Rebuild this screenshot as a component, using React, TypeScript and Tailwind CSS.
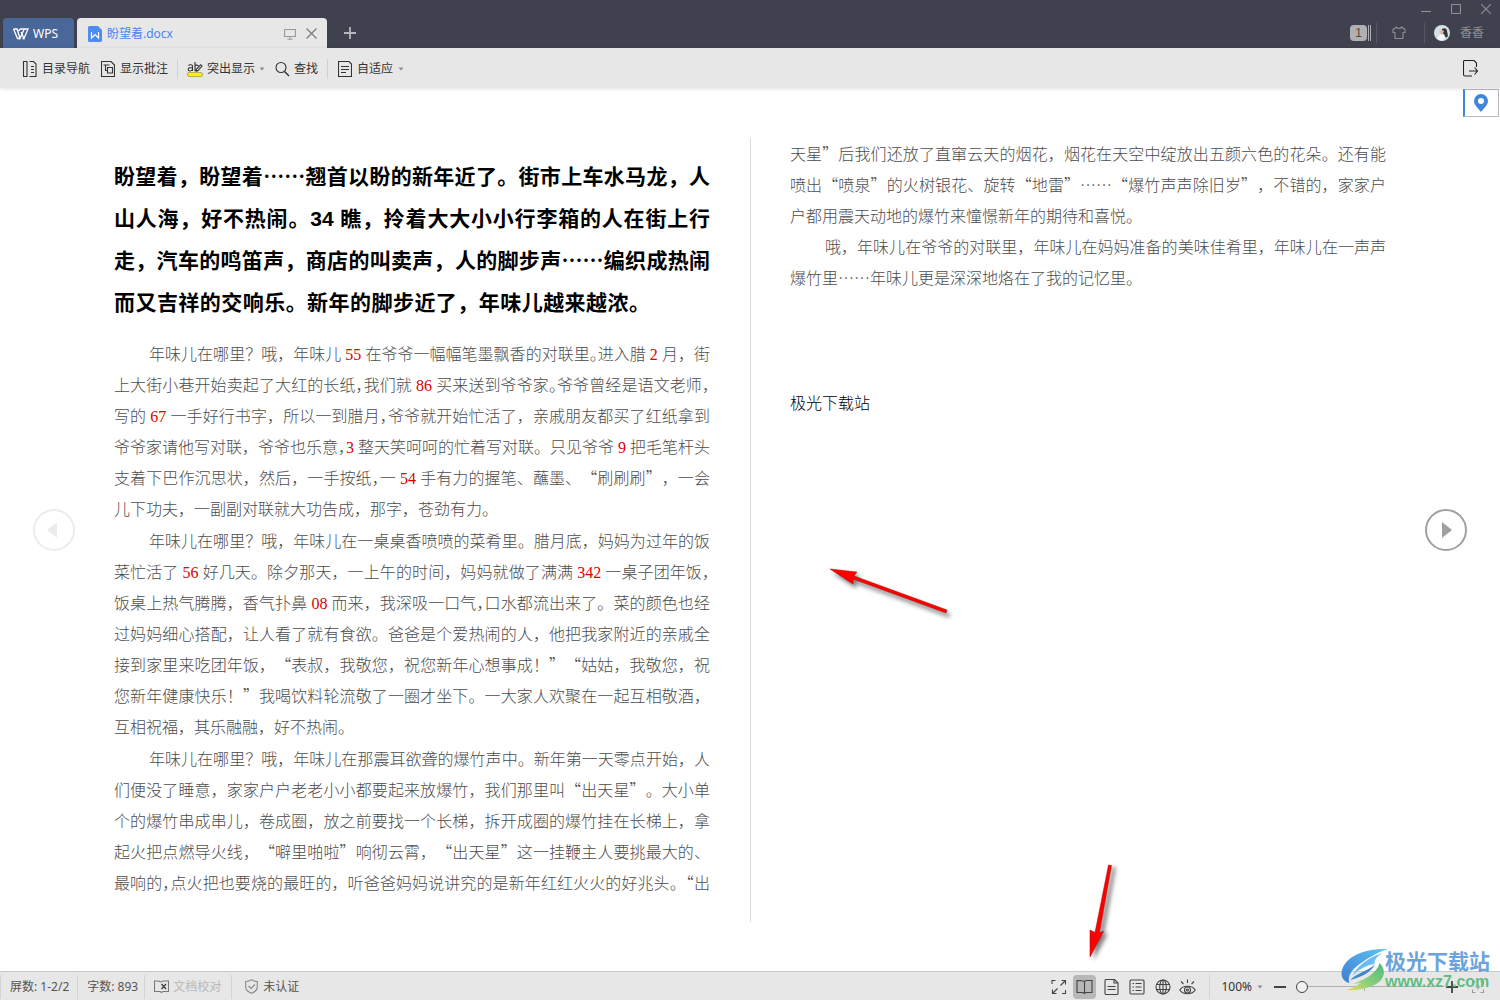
import React from 'react';

type IconProps = { className?: string; children: React.ReactNode; w?: number; h?: number };

const Icon = ({ className = '', children, w = 16, h = 16 }: IconProps) => (
  <svg
    width={w}
    height={h}
    viewBox={`0 0 ${w} ${h}`}
    fill="none"
    stroke="currentColor"
    strokeWidth="1.1"
    className={`shrink-0 ${className}`}
    aria-hidden="true"
  >
    {children}
  </svg>
);

const Caret = () => (
  <svg width="6" height="4" viewBox="0 0 6 4" className="shrink-0 fill-[#8a8a8a]" aria-hidden="true">
    <path d="M0.5 0.5h5L3 3.5z" />
  </svg>
);

// "^" in front of a punctuation mark sets it half width
const HEADING = [
  '盼望着，盼望着……翘首以盼的新年近了。街市上车水马龙，人',
  '山人海，好不热闹。34 瞧，拎着大大小小行李箱的人在街上行',
  '走，汽车的鸣笛声，商店的叫卖声，人的脚步声……编织成热闹',
  '而又吉祥的交响乐。新年的脚步近了，年味儿越来越浓。',
];

const LEFT = [
  [
    '年味儿在哪里？哦，年味儿 55 在爷爷一幅幅笔墨飘香的对联里^。进入腊 2 月，街',
    '上大街小巷开始卖起了大红的长纸^，我们就 86 买来送到爷爷家^。爷爷曾经是语文老师^，',
    '写的 67 一手好行书字，所以一到腊月^，爷爷就开始忙活了，亲戚朋友都买了红纸拿到',
    '爷爷家请他写对联，爷爷也乐意^，3 整天笑呵呵的忙着写对联。只见爷爷 9 把毛笔杆头',
    '支着下巴作沉思状，然后，一手按纸^，一 54 手有力的握笔、蘸墨、“刷刷刷”，一会',
    '儿下功夫，一副副对联就大功告成，那字，苍劲有力。',
  ],
  [
    '年味儿在哪里？哦，年味儿在一桌桌香喷喷的菜肴里。腊月底，妈妈为过年的饭',
    '菜忙活了 56 好几天。除夕那天，一上午的时间，妈妈就做了满满 342 一桌子团年饭^，',
    '饭桌上热气腾腾，香气扑鼻 08 而来，我深吸一口气^，口水都流出来了。菜的颜色也经',
    '过妈妈细心搭配，让人看了就有食欲。爸爸是个爱热闹的人，他把我家附近的亲戚全',
    '接到家里来吃团年饭，“表叔，我敬您，祝您新年心想事成！”“姑姑，我敬您，祝',
    '您新年健康快乐！”我喝饮料轮流敬了一圈才坐下。一大家人欢聚在一起互相敬酒，',
    '互相祝福，其乐融融，好不热闹。',
  ],
  [
    '年味儿在哪里？哦，年味儿在那震耳欲聋的爆竹声中。新年第一天零点开始，人',
    '们便没了睡意，家家户户老老小小都要起来放爆竹，我们那里叫“出天星”。大小单',
    '个的爆竹串成串儿，卷成圈，放之前要找一个长梯，拆开成圈的爆竹挂在长梯上，拿',
    '起火把点燃导火线，“噼里啪啦”响彻云霄，“出天星”这一挂鞭主人要挑最大的、',
    '最响的^，点火把也要烧的最旺的，听爸爸妈妈说讲究的是新年红红火火的好兆头^。“出',
  ],
];

const RIGHT = [
  [
    '天星”后我们还放了直窜云天的烟花，烟花在天空中绽放出五颜六色的花朵。还有能',
    '喷出“喷泉”的火树银花、旋转“地雷”……“爆竹声声除旧岁”，不错的，家家户',
    '户都用震天动地的爆竹来憧憬新年的期待和喜悦。',
  ],
  [
    '哦，年味儿在爷爷的对联里，年味儿在妈妈准备的美味佳肴里，年味儿在一声声',
    '爆竹里……年味儿更是深深地烙在了我的记忆里。',
  ],
];

const renderLine = (text: string, digits: string) =>
  text.split(/(\^.| ?\d+ ?)/).map((part, i) => {
    if (part.startsWith('^')) {
      return <span key={i} className="[font-feature-settings:'halt']">{part.slice(1)}</span>;
    }
    if (/\d/.test(part)) {
      return <span key={i} className={digits}>{part}</span>;
    }
    return part;
  });

const Paragraph = ({ lines, indent = true, open = false }: { lines: string[]; indent?: boolean; open?: boolean }) => (
  <p>
    {lines.map((line, i) => {
      const last = i === lines.length - 1 && !open;
      return (
        <span
          key={i}
          className={`block h-[31px] whitespace-nowrap ${last ? '' : '[text-align-last:justify]'} ${i === 0 && indent ? 'pl-[35px]' : ''}`}
        >
          {renderLine(line, "font-['Liberation_Serif',serif] text-[#e00000]")}
        </span>
      );
    })}
  </p>
);

const TitleBar = () => (
  <header className="flex h-12 items-end bg-[#3f424e] pl-[3px]">
    <button className="flex h-[30px] w-[71px] items-center gap-1 rounded-t bg-[#4a6799] pl-2.5 pt-px text-xs text-white">
      <Icon w={16} h={12} className="text-white">
        <path d="M0.5 1h3.5l3 9.5L11 1.5M4.5 3.5L7.5 1h7.5L11 10.5 8 4M0.5 1l4 9.5h2.5l1.5-3.5M11 10.5H9.5" strokeWidth="1.3" />
      </Icon>
      WPS
    </button>
    <div className="ml-[3px] flex h-[30px] w-[250px] items-center rounded-t bg-[#e7e7e7] pl-[11px] pr-2.5 pt-px">
      <svg width="14" height="16" viewBox="0 0 14 16" className="shrink-0" aria-hidden="true">
        <path d="M1.5 0H10l4 4v10.5a1.5 1.5 0 0 1-1.5 1.5h-11A1.5 1.5 0 0 1 0 14.5v-13A1.5 1.5 0 0 1 1.5 0z" fill="#4f8bf0" />
        <path d="M3.5 6v6L7 8.5l3.5 3.5V6" fill="none" stroke="#fff" strokeWidth="1.2" />
      </svg>
      <span className="ml-[5px] flex-1 text-xs text-[#4a86ee]">盼望着.docx</span>
      <button aria-label="演示" className="text-[#999]">
        <Icon w={12} h={12}>
          <path d="M0.5 1.5h11v7H0.5zM6 8.500v2.500M3.500 11.300h5" />
        </Icon>
      </button>
      <button aria-label="关闭标签" className="ml-2.5 text-[#777]">
        <Icon w={11} h={11}>
          <path d="M0.5 0.5l10 10M10.500 0.500l-10 10" />
        </Icon>
      </button>
    </div>
    <button aria-label="新建" className="mb-[9px] ml-[17px] text-[#b5b7bc]">
      <Icon w={12} h={12}>
        <path d="M6 0v12M0 6h12" strokeWidth="1.8" />
      </Icon>
    </button>
    <div className="ml-auto flex h-12 flex-col justify-between pb-[5px] pt-1">
      <div className="flex justify-end gap-5 pr-[9px] text-[#8d8f97]">
        <button aria-label="最小化"><Icon w={10} h={10}><path d="M0 7.500h10" /></Icon></button>
        <button aria-label="最大化"><Icon w={10} h={10}><rect x="0.5" y="0.5" width="9" height="9" rx="1" /></Icon></button>
        <button aria-label="关闭"><Icon w={10} h={10}><path d="M0 0l10 10M10 0L0 10" /></Icon></button>
      </div>
      <div className="flex items-center pr-4 text-[#8d8f97]">
        <button className="flex items-center gap-px">
          <span className="h-4 w-[17px] rounded-sm bg-[#b0b0b4] text-center font-['Liberation_Sans',sans-serif] text-xs leading-4 text-[#5c4630]">1</span>
          <span className="h-4 w-px bg-[#b0b0b4]" />
          <span className="h-4 w-px bg-[#b0b0b4]" />
        </button>
        <span className="ml-[5px] h-5 w-px bg-[#565963]" />
        <button aria-label="皮肤" className="ml-[15px]">
          <Icon w={14} h={14}>
            <path d="M4.500 1L1 3.500v3h2v6h8v-6h2v-3L9.500 1c-.6 2-4.400 2-5 0z" strokeLinejoin="round" />
          </Icon>
        </button>
        <span className="ml-[18px] h-5 w-px bg-[#565963]" />
        <svg width="16" height="16" viewBox="0 0 16 16" className="ml-[9px]" aria-hidden="true">
          <circle cx="8" cy="8" r="8" fill="#d5e2e5" />
          <path d="M8 4c2-1.500 5-1 5 2l1 5-2 2-2-4-3-1z" fill="#3a3236" />
          <path d="M5.500 6c1-1 4-1 4.500 0l-1 2.500L6 9z" fill="#e2b9ae" />
          <path d="M3 13l4-4 4 3-2 3.500c-2.500.3-4.500-.5-6-2.500z" fill="#f4f7f8" />
        </svg>
        <span className="ml-2.5 text-xs leading-4">香香</span>
      </div>
    </div>
  </header>
);

const ToolBar = () => (
  <nav className="relative z-10 flex h-10 items-center bg-[#e7e7e7] pl-[22px] pr-[22px] pt-px text-xs text-[#333] shadow-[0_1px_4px_rgba(0,0,0,0.12)]">
    <button className="flex items-center gap-[5px]">
      <Icon w={15}>
        <path d="M1.500.5h3.500v15H1.500zM7.500.5h4l2.500 2.500v12.500H7.500M9 5.500h3M9 8.500h3M9 11.500h3" />
      </Icon>
      目录导航
    </button>
    <button className="ml-[11px] flex items-center gap-[5px]">
      <Icon w={14}>
        <path d="M.5.5h9.500l3.500 3.500v11.500H.5zM2.500 4h6M4.500 4v5.500h1.500M6.500 6.500h5v5.500h-5z" />
      </Icon>
      显示批注
    </button>
    <span className="ml-[9px] h-5 w-px bg-[#d0d0d0]" />
    <button className="ml-[9px] flex items-center gap-1">
      <svg width="16" height="16" viewBox="0 0 16 16" fill="none" stroke="#333" strokeWidth="1.1" aria-hidden="true">
        <path d="M1.500 4.500c1-1 4-1.200 4 .8v4.700M5.500 6.500c-2 0-4.300.2-4.300 2s3 2 4.300 0M8 1v9M8 5c1.500-1.600 4-.8 4 1.500M8 9.500c1 .8 2 .8 3 0l4-4.500-1.200-1.300-4.300 4.300-.5 2" />
        <rect x="0.5" y="11.500" width="15" height="4" rx="1.500" fill="#fff100" stroke="#8b8b4a" strokeWidth="0.6" />
      </svg>
      突出显示
      <Caret />
    </button>
    <button className="ml-2.5 flex items-center gap-1">
      <Icon w={15}>
        <circle cx="6" cy="6.500" r="5" />
        <path d="M9.500 10.500l4.500 4.500" strokeWidth="1.4" />
      </Icon>
      查找
    </button>
    <span className="ml-[9px] h-5 w-px bg-[#d0d0d0]" />
    <button className="ml-2.5 flex items-center gap-[5px]">
      <Icon w={14}>
        <path d="M.5.5h10.500l2.500 2.500v12.500H.5zM3 5.500h8M3 8.500h8M3 11.500h5" />
      </Icon>
      <span>自适应</span>
      <Caret />
    </button>
    <button aria-label="退出阅读" className="ml-auto">
      <Icon w={15} h={17} className="text-[#222]">
        <path d="M9 16H2a1.500 1.500 0 0 1-1.500-1.500v-13A1 1 0 0 1 1.500.5H11l2.500 2.500v4M6 11h9M11.500 7.500l3 3.500-3 3.500" />
      </Icon>
    </button>
  </nav>
);

const Divider = ({ className = '' }: { className?: string }) => (
  <span className={`h-6 w-px bg-[#d3d3d3] ${className}`} />
);

const StatusBar = () => (
  <footer className="flex h-[29px] items-center border-t border-[#c9c9c9] bg-[#e7e7e7] pt-px text-xs text-[#555]">
    <Divider />
    <span className="ml-[9px]">屏数: 1-2/2</span>
    <Divider className="ml-2" />
    <span className="ml-[9px]">字数: 893</span>
    <Divider className="ml-1.5" />
    <button className="ml-[9px] flex items-center gap-1 text-[#b8b8b8]">
      <Icon w={15} h={13} className="text-[#777]">
        <path d="M7 2C5.500 1 3 .8.5 1v10.500h5c1 0 1.500.5 2 1 .5-.5 1-1 2-1h5V1h-5C8.500 1 8 1.500 7.500 2" />
        <path d="M7.500 4l4.500 5M12 4L7.500 9" strokeWidth="1.400" stroke="#444" />
      </Icon>
      文档校对
    </button>
    <Divider className="ml-2.5" />
    <button className="ml-[13px] flex items-center gap-[5px]">
      <Icon w={13} h={15} className="text-[#888]">
        <path d="M6.500.7C5 2 3 2.500.7 2.500V8c0 3 2.500 5 5.800 6.300C9.800 13 12.300 11 12.300 8V2.500C10 2.500 8 2 6.500.7zM3.500 7l2.500 2.500L10 5.500" />
      </Icon>
      未认证
    </button>

    <div className="ml-auto flex items-center text-[#444]">
      <button aria-label="全屏">
        <Icon w={16}><path d="M1 5V1.500h3.500M10.500 1.500h4V5.500M14.500 1.500l-5 5M1.500 10.500v4h4M1.500 14.500l5-5M14.500 11v3.500H11" /></Icon>
      </button>
      <button aria-label="阅读版式" aria-pressed="true" className="ml-1.5 flex h-6 w-[23px] items-center justify-center rounded bg-[#b8b8b8]">
        <Icon w={17}><path d="M8.500 2.500C7.500 1.500 6 1.500 1 1.500v12h5.500c1 0 1.500.5 2 1 .5-.5 1-1 2-1H16v-12h-5c-1.500 0-2 .3-2.500 1zv12" /></Icon>
      </button>
      <button aria-label="页面视图" className="ml-2">
        <Icon w={15}><path d="M2 .5h8.500L14 4v10.500a1 1 0 0 1-1 1H2a1 1 0 0 1-1-1v-13a1 1 0 0 1 1-1zM10 .5V4h4M3.500 7.500h8M3.500 10.500h8" /></Icon>
      </button>
      <button aria-label="大纲视图" className="ml-2.5">
        <Icon w={16}><rect x="1" y="1" width="14" height="14" rx="1" /><path d="M3.500 4.500h1.500M6.500 4.500h6M3.500 8h1.500M6.500 8h6M6.500 11.500h6M3.500 11.500h1.500" /></Icon>
      </button>
      <button aria-label="网页版式" className="ml-2.5">
        <Icon w={16}><circle cx="8" cy="8" r="7" /><ellipse cx="8" cy="8" rx="3.300" ry="7" /><path d="M1.500 5.500h13M1.500 10.500h13M8 1v14" /></Icon>
      </button>
      <button aria-label="护眼模式" className="ml-2">
        <Icon w={17}><path d="M.8 11c3-5 12.400-5 15.400 0-3 5-12.400 5-15.400 0zM8.500.5v3.500M2 2.500l2.500 2.500M15 2.500L12.500 5" /><circle cx="8.500" cy="11" r="3" /><circle cx="8.500" cy="11" r="1" /></Icon>
      </button>
      <Divider className="ml-[13px]" />
      <button className="ml-[11px] flex items-center gap-[5px] text-[#333]">100%<Caret /></button>
      <button aria-label="缩小" className="ml-[11px] h-0.5 w-3 bg-[#444]" />
      <div className="relative ml-2.5 flex h-3 w-[148px] items-center">
        <span className="h-px w-full bg-[#b0b0b0]" />
        <span className="absolute left-[68px] h-2 w-px bg-[#b0b0b0]" />
        <input
          type="range"
          aria-label="缩放"
          min={0}
          max={100}
          defaultValue={0}
          className="absolute inset-0 h-3 w-full appearance-none bg-transparent [&::-webkit-slider-thumb]:size-3 [&::-webkit-slider-thumb]:appearance-none [&::-webkit-slider-thumb]:rounded-full [&::-webkit-slider-thumb]:border [&::-webkit-slider-thumb]:border-[#444] [&::-webkit-slider-thumb]:bg-[#f2f2f2]"
        />
      </div>
      <button aria-label="放大" className="ml-0.5">
        <Icon w={12} h={12}><path d="M6 0v12M0 6h12" strokeWidth="1.800" /></Icon>
      </button>
      <button aria-label="适应窗口" className="ml-3.5 mr-4 text-[#999]">
        <Icon w={12} h={12}><path d="M.5 3.500v-3h3M8.500.5h3v3M11.500 8.500v3h-3M3.500 11.500h-3v-3M6 3.500v5M3.500 6h5" /></Icon>
      </button>
    </div>
  </footer>
);

const Watermark = () => (
  <div className="pointer-events-none absolute bottom-[7px] right-2.5 z-20 flex items-start">
    <svg width="48" height="44" viewBox="0 0 46 44" preserveAspectRatio="none" aria-hidden="true">
      <defs>
        <linearGradient id="blueWing" x1="0" y1="1" x2="1" y2="0">
          <stop offset="0" stopColor="#3f7fd0" />
          <stop offset="1" stopColor="#5cc4f5" />
        </linearGradient>
        <linearGradient id="greenWing" x1="0" y1="1" x2="1" y2="0">
          <stop offset="0" stopColor="#e8dc5a" />
          <stop offset="0.4" stopColor="#8fd07c" />
          <stop offset="1" stopColor="#4dba7c" />
        </linearGradient>
      </defs>
      {/* two interlocking crescents with a pale gap between them */}
      <path d="M45 1C28 0 10 5 3 17c-5 9-2 16 5 18-2-7 2-13 10-19C25 11 33 5 45 1z" fill="url(#blueWing)" />
      <path d="M40 5C27 9 16 17 11 28c6-7 14-11 21-12 0-5 3-8 8-11z" fill="#69bdf0" />
      <path d="M37 15c7 7 5 17-5 22-8 4-19 6-27 5 6-2 10-4 14-7l-8 1c11-4 23-10 26-21z" fill="url(#greenWing)" />
      <path d="M9 32c6-7 17-9 24-16-4 8-13 13-24 16z" fill="#3e87c9" />
    </svg>
    <div className="-ml-1 pt-px">
      <p className="font-['Noto_Sans_CJK_SC',sans-serif] text-[21px] font-bold leading-[22px] text-[#6ba3dc]">极光下载站</p>
      <p className="font-['Liberation_Sans',sans-serif] text-base font-bold leading-[22px] text-[#62bd83]">www.xz7.com</p>
    </div>
  </div>
);

export default function App() {
  return (
    <div className="relative flex min-h-screen flex-col bg-white font-['Noto_Sans','Noto_Sans_CJK_SC',sans-serif]">
      <TitleBar />
      <ToolBar />

      <main className="relative flex flex-1 items-stretch px-[33px] pb-[49px] pt-[50px]">
        <button aria-label="上一页" className="flex size-[42px] shrink-0 items-center justify-center self-center rounded-full border-2 border-[#ececec]">
          <svg width="10" height="16" viewBox="0 0 10 16" className="mr-1 fill-[#ececec]"><path d="M10 0v16L0 8z" /></svg>
        </button>

        <article lang="zh-CN" className="mx-[39px] flex flex-1 font-['Noto_Sans_CJK_SC',sans-serif] text-base leading-[31px] text-[#4c4c4c] [text-spacing-trim:space-all]">
          <section className="min-w-0 flex-1">
            <h1 className="mt-4 text-[21px] font-bold leading-[42px] text-black">
              {HEADING.map((line, i) => (
                <span key={i} className={`block h-[42px] whitespace-nowrap [text-align-last:justify] ${i === 3 ? 'mr-[60px]' : ''}`}>
                  {renderLine(line, "font-['Liberation_Sans',sans-serif]")}
                </span>
              ))}
            </h1>
            <div className="mt-4 space-y-px font-light">
              {LEFT.map((lines, i) => (
                <Paragraph key={i} lines={lines} open={i === 2} />
              ))}
            </div>
          </section>
          <div className="ml-10 mr-[39px] w-px bg-[#dcdcdc]" />
          <section className="min-w-0 flex-1 font-light">
            {RIGHT.map((lines, i) => (
              <Paragraph key={i} lines={lines} indent={i > 0} />
            ))}
            <p className="mt-[94px] text-black">极光下载站</p>
          </section>
        </article>

        <button aria-label="下一页" className="flex size-[42px] shrink-0 items-center justify-center self-center rounded-full border-2 border-[#a0a0a0]">
          <svg width="10" height="16" viewBox="0 0 10 16" className="ml-0.5 fill-[#a0a0a0]"><path d="M0 0v16l10-8z" /></svg>
        </button>

        <button aria-label="定位" className="absolute right-px top-px flex h-7 w-9 items-center justify-center border border-l-2 border-[#b8b8c0] border-l-[#4186d8] bg-white pr-0.5">
          <svg width="14" height="18" viewBox="0 0 14 18" aria-hidden="true">
            <path d="M7 0a7 7 0 0 1 7 7c0 4-4 7-7 11C4 14 0 11 0 7a7 7 0 0 1 7-7zm0 4a3 3 0 1 0 0 6 3 3 0 0 0 0-6z" fill="#4186d8" fillRule="evenodd" />
          </svg>
        </button>

        <svg width="130" height="60" viewBox="0 0 130 60" className="absolute left-[825px] top-[472px] drop-shadow-[3px_4px_2px_rgba(0,0,0,0.5)]" aria-hidden="true">
          <path d="M5 9l27 3-3 4 93 34-1 3-93-34v5z" fill="#f00" stroke="#a00" strokeWidth="0.5" />
        </svg>
        <svg width="40" height="110" viewBox="0 0 40 110" className="absolute left-[1080px] top-[770px] drop-shadow-[4px_2px_2px_rgba(0,0,0,0.5)]" aria-hidden="true">
          <path d="M28.500 7l3 .5-12 67 4-1L10 99l0-27 5 2.500z" fill="#f00" stroke="#a00" strokeWidth="0.5" />
        </svg>
      </main>

      <StatusBar />
      <Watermark />
    </div>
  );
}
